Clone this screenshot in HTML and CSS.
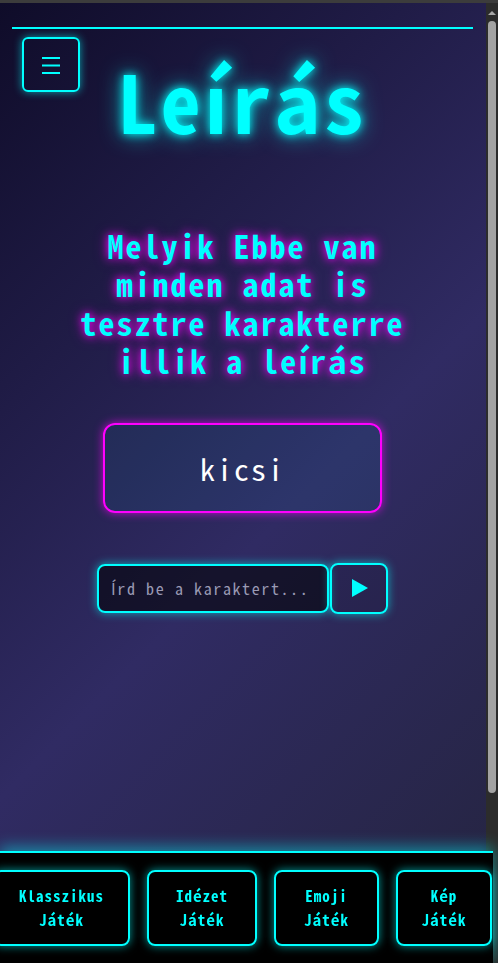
FILE: index.html
```html
<!DOCTYPE html>
<html lang="hu">
<head>
<meta charset="utf-8">
<title>Leírás</title>
<link rel="stylesheet" href="styles.css">
</head>
<body>
<div class="window">
  <div class="topbar"></div>
  <div class="viewport">
    <main class="page">
      <div class="rule"></div>
      <button class="menu-btn" aria-label="Menü">
        <svg width="18" height="18" viewBox="0 0 18 18"><path d="M0 2h18M0 9.5h18M0 17h18" stroke="#00ffff" stroke-width="1.8"/></svg>
      </button>
      <h1 class="title">Leírás</h1>
      <p class="question">Melyik Ebbe van minden adat is tesztre karakterre illik a leírás</p>
      <div class="answer-card">kicsi</div>
      <form class="guess">
        <input class="guess-input" type="text" placeholder="Írd be a karaktert...">
        <button class="guess-btn" type="button" aria-label="Küldés">
          <svg width="16" height="18" viewBox="0 0 16 18"><polygon points="0,0 16,9 0,18" fill="#00ffff"/></svg>
        </button>
      </form>
    </main>
    <div class="scrollbar">
      <div class="sb-arrow"></div>
      <div class="sb-thumb"></div>
    </div>
  </div>
  <nav class="modes">
    <a class="mode mode-classic">Klasszikus<br>Játék</a>
    <a class="mode mode-quote">Idézet<br>Játék</a>
    <a class="mode mode-emoji">Emoji<br>Játék</a>
    <a class="mode mode-image">Kép<br>Játék</a>
  </nav>
</div>
</body>
</html>
```
FILE: styles.css
```css
* { box-sizing: border-box; }
html, body { margin: 0; padding: 0; }
body {
  width: 498px;
  height: 963px;
  overflow: hidden;
  background: #2b2b2b;
  font-family: "Noto Sans Mono CJK SC", "DejaVu Sans Mono", monospace;
}
.window { display: flex; flex-direction: column; height: 963px; }
.topbar { height: 3px; background: #3c3c3c; flex: none; }
.viewport { display: flex; flex: 1; min-height: 0; }
.page {
  position: relative;
  flex: 1;
  background: linear-gradient(135deg, #0f0c29 0%, #302b63 55%, #24243e 100%);
  padding: 24px 13px 0 12px;
  display: flex;
  flex-direction: column;
  align-items: center;
}
.rule { width: 100%; height: 2px; background: #00ffff; flex: none; }
.menu-btn {
  position: absolute;
  left: 22px;
  top: 34px;
  width: 58px;
  height: 55px;
  border: 2px solid #00ffff;
  border-radius: 6px;
  background: transparent;
  box-shadow: 0 0 8px rgba(0,255,255,0.6);
  display: flex;
  align-items: center;
  justify-content: center;
  padding: 0;
}
.title {
  margin: 30px 0 0;
  font-size: 80px;
  line-height: 1;
  font-weight: 700;
  letter-spacing: 3px;
  color: #00ffff;
  text-shadow: 0 0 10px #00ffff, 0 0 22px rgba(0,255,255,0.7);
}
.question {
  margin: 87px 0 0;
  max-width: 360px;
  text-align: center;
  font-size: 32px;
  line-height: 38.4px;
  font-weight: 700;
  letter-spacing: 2px;
  color: #00ffff;
  text-shadow: 0 0 8px #ff00ff, 0 0 14px rgba(255,0,255,0.5);
}
.answer-card {
  margin-top: 43px;
  width: 279px;
  height: 90px;
  border: 2px solid #ff00ff;
  border-radius: 12px;
  background: rgba(0,255,255,0.05);
  box-shadow: 0 0 10px rgba(255,0,255,0.7);
  display: flex;
  align-items: center;
  justify-content: center;
  color: #ffffff;
  font-size: 30px;
  letter-spacing: 2px;
}
.guess {
  margin: 50px 0 0;
  display: flex;
  align-items: center;
  gap: 1px;
}
.guess-input {
  width: 232px;
  height: 49px;
  border: 2px solid #00ffff;
  border-radius: 8px;
  background: rgba(0,0,0,0.55);
  box-shadow: 0 0 10px rgba(0,255,255,0.6);
  padding: 0 12px;
  color: #ffffff;
  font-family: inherit;
  font-size: 16px;
  letter-spacing: 1.6px;
  outline: none;
}
.guess-input::placeholder { color: #9a9ab4; }
.guess-btn {
  width: 58px;
  height: 51px;
  border: 2px solid #00ffff;
  border-radius: 8px;
  background: rgba(0,0,0,0.1);
  box-shadow: 0 0 10px rgba(0,255,255,0.6);
  display: flex;
  align-items: center;
  justify-content: center;
  padding: 0 0 0 2px;
}
.scrollbar {
  width: 12px;
  flex: none;
  background: #2c2c2c;
  display: flex;
  flex-direction: column;
  align-items: center;
}
.sb-arrow {
  margin-top: 8px;
  width: 0;
  height: 0;
  border-left: 4px solid transparent;
  border-right: 4px solid transparent;
  border-bottom: 4px solid #a8a8a8;
}
.sb-thumb {
  margin-top: 6px;
  width: 8px;
  height: 772px;
  border-radius: 4px;
  background: #a3a3a3;
}
.modes {
  position: fixed;
  left: 0;
  bottom: 0;
  width: 493px;
  height: 112px;
  background: #000000;
  border-top: 2px solid #00ffff;
  box-shadow: 0 -4px 14px rgba(0,255,255,0.45);
  display: flex;
  justify-content: center;
  align-items: center;
  gap: 17px;
  padding: 0 8px 0 0;
}
.mode {
  flex: none;
  height: 76px;
  border: 2px solid #00ffff;
  border-radius: 8px;
  box-shadow: 0 0 10px rgba(0,255,255,0.6);
  display: flex;
  align-items: center;
  justify-content: center;
  text-align: center;
  color: #00ffff;
  font-size: 15px;
  font-weight: 700;
  line-height: 24px;
  letter-spacing: 1px;
}
.mode-classic { width: 137px; }
.mode-quote { width: 110px; }
.mode-emoji { width: 105px; }
.mode-image { width: 96px; }
```
